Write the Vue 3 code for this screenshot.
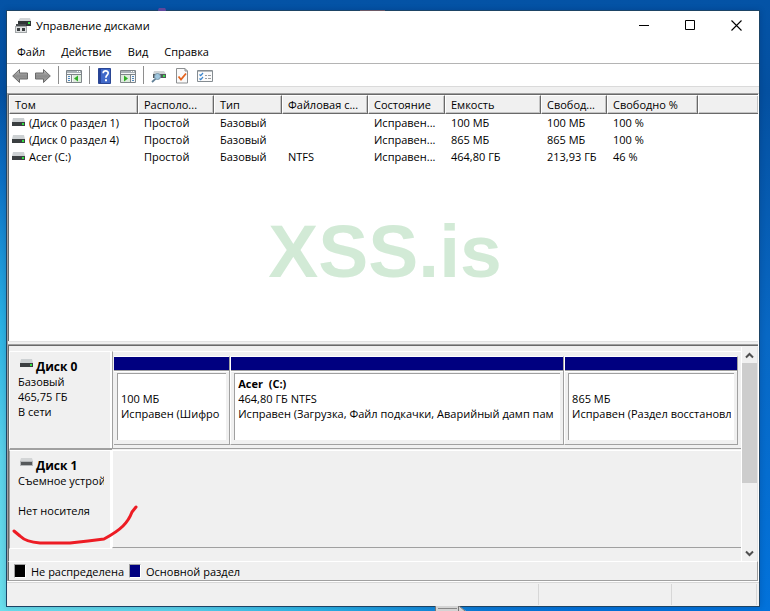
<script setup>
const menus = ['Файл', 'Действие', 'Вид', 'Справка']

const columns = [
  { title: 'Том', cls: 'c-volume' },
  { title: 'Располо...', cls: 'c-layout' },
  { title: 'Тип', cls: 'c-type' },
  { title: 'Файловая с...', cls: 'c-fs' },
  { title: 'Состояние', cls: 'c-state' },
  { title: 'Емкость', cls: 'c-size' },
  { title: 'Свобод...', cls: 'c-free' },
  { title: 'Свободно %', cls: 'c-percent' },
  { title: '', cls: 'c-rest' },
]

const volumes = [
  ['(Диск 0 раздел 1)', 'Простой', 'Базовый', '', 'Исправен...', '100 МБ', '100 МБ', '100 %', ''],
  ['(Диск 0 раздел 4)', 'Простой', 'Базовый', '', 'Исправен...', '865 МБ', '865 МБ', '100 %', ''],
  ['Acer (C:)', 'Простой', 'Базовый', 'NTFS', 'Исправен...', '464,80 ГБ', '213,93 ГБ', '46 %', ''],
]

const partitions = [
  { name: '', size: '100 МБ', state: 'Исправен (Шифро', grow: 116 },
  { name: 'Acer  (C:)', size: '464,80 ГБ NTFS', state: 'Исправен (Загрузка, Файл подкачки, Аварийный дамп пам', grow: 334 },
  { name: '', size: '865 МБ', state: 'Исправен (Раздел восстановл', grow: 173 },
]
</script>

<template>
  <div class="desktop">
    <svg class="speck speck-top" width="230" height="3" viewBox="0 0 230 3" aria-hidden="true">
      <path d="M0 3a4 4 0 0 1 8 0z" fill="#5f479c" />
      <path d="M202 2h25v1h-25z" fill="#6d5a66" />
    </svg>
    <svg class="speck speck-bottom" width="32" height="5" viewBox="0 0 32 5" aria-hidden="true">
      <path d="M1 0h23l7 5H1z" fill="#d4d4d4" />
      <path d="M0.500 0v5M23.500 0v5M24 0l6 5" stroke="#777" fill="none" />
      <path d="M3 2.500h19" stroke="#888" />
    </svg>

    <main class="window">
      <header class="titlebar">
        <svg width="16" height="16" viewBox="0 0 16 16" aria-hidden="true">
          <path d="M5 0h10l1 3H3z" fill="#d3d6d8" />
          <path d="M3 3h13v5H3z" fill="#303436" />
          <path d="M13 4h2v2h-2z" fill="#35e045" />
          <path d="M1 6h10v3H1z" fill="#4a4e50" />
          <path d="M0 8h12v7H0z" fill="#a3a7a9" />
          <path d="M1 9h10v5H1z" fill="#dfe1e2" />
          <path d="M2 10h3v3H2zM7 10h3v3H7z" fill="#3a3e40" />
        </svg>
        <h1>Управление дисками</h1>
        <div class="caption-buttons">
          <button type="button" aria-label="Свернуть">
            <svg width="11" height="11" viewBox="0 0 11 11"><path d="M0 5.500h10" stroke="#000" /></svg>
          </button>
          <button type="button" aria-label="Развернуть">
            <svg width="11" height="11" viewBox="0 0 11 11"><path d="M.5.5h9v9h-9z" fill="none" stroke="#000" /></svg>
          </button>
          <button type="button" aria-label="Закрыть">
            <svg width="11" height="11" viewBox="0 0 11 11"><path d="M.5.5l10 10M10.500.5l-10 10" stroke="#000" stroke-width="1.100" /></svg>
          </button>
        </div>
      </header>

      <nav class="menubar">
        <button v-for="m in menus" :key="m" type="button">{{ m }}</button>
      </nav>

      <div class="toolbar" role="toolbar">
        <button type="button" aria-label="Назад">
          <svg width="16" height="16" viewBox="0 0 16 16">
            <defs>
              <linearGradient id="arrow" x1="0" y1="0" x2="0" y2="1">
                <stop offset="0" stop-color="#c4c4c4" /><stop offset=".5" stop-color="#8b8b8b" /><stop offset="1" stop-color="#a8a8a8" />
              </linearGradient>
            </defs>
            <path d="M.7 8L7.500 1.500v3.500h8v6h-8v3.500z" fill="url(#arrow)" stroke="#6a6a6a" />
          </svg>
        </button>
        <button type="button" aria-label="Вперед">
          <svg width="16" height="16" viewBox="0 0 16 16"><path d="M15.300 8L8.500 1.500v3.500h-8v6h8v3.500z" fill="url(#arrow)" stroke="#6a6a6a" /></svg>
        </button>
        <span class="sep"></span>
        <button type="button" aria-label="Дерево консоли">
          <svg width="16" height="16" viewBox="0 0 16 16">
            <path d="M.5 2.500h15v12H.5z" fill="#f6f7f8" stroke="#7e8589" />
            <path d="M1 3h14v2H1z" fill="#a9b1b6" /><path d="M11 3h1v1h-1zM13 3h1v1h-1z" fill="#fff" />
            <path d="M1 6.500h14M5.500 7v7" stroke="#7e8589" />
            <path d="M2 8.500h2M2 10.500h2M2 12.500h2" stroke="#4c88bd" />
            <path d="M7 7h8v7H7z" fill="#ddebdc" /><path d="M12 7.500v6L8 10.500z" fill="#2fae25" />
          </svg>
        </button>
        <span class="sep"></span>
        <button type="button" aria-label="Справка">
          <svg width="16" height="16" viewBox="0 0 16 16">
            <path d="M1.500.5h12v15h-12z" fill="#4169c9" stroke="#2a4694" />
            <path d="M2 1h2v14H2z" fill="#274399" />
            <path d="M6.200 5.200C6.200 2.300 11.200 2.200 11.200 5c0 2.100-2.300 2.200-2.300 4.700" fill="none" stroke="#fff" stroke-width="1.700" />
            <path d="M8 11.300h2v2H8z" fill="#fff" />
          </svg>
        </button>
        <button type="button" aria-label="Панель действий">
          <svg width="16" height="16" viewBox="0 0 16 16">
            <path d="M.5 2.500h15v12H.5z" fill="#f6f7f8" stroke="#7e8589" />
            <path d="M1 3h14v2H1z" fill="#a9b1b6" /><path d="M11 3h1v1h-1zM13 3h1v1h-1z" fill="#fff" />
            <path d="M1 6.500h14M10.500 7v7" stroke="#7e8589" />
            <path d="M12 8.500h2M12 10.500h2M12 12.500h2" stroke="#4c88bd" />
            <path d="M1 7h9v7H1z" fill="#ddebdc" /><path d="M4 7.500v6l4-3z" fill="#2fae25" />
          </svg>
        </button>
        <span class="sep"></span>
        <button type="button" aria-label="Повторить проверку дисков">
          <svg width="16" height="16" viewBox="0 0 16 16">
            <path d="M3 3h10l2 3H2z" fill="#cfd3d5" />
            <path d="M2 6h13v4H2z" fill="#53595c" /><path d="M12 7h2v2h-2z" fill="#3be04b" />
            <circle cx="6.500" cy="8.500" r="3" fill="#9fc6de" stroke="#7a98aa" />
            <path d="M4.500 10.800L1 14" stroke="#5f7f96" stroke-width="1.800" />
          </svg>
        </button>
        <button type="button" aria-label="Свойства">
          <svg width="16" height="16" viewBox="0 0 16 16">
            <path d="M2.500.5h8.500l2.500 2.500v12h-11z" fill="#fafafa" stroke="#8c8f91" />
            <path d="M11 .5v2.500h2.500" fill="none" stroke="#8c8f91" />
            <path d="M4.500 8.500l2.500 3 5-6" fill="none" stroke="#e5641e" stroke-width="1.800" />
          </svg>
        </button>
        <button type="button" aria-label="Параметры">
          <svg width="16" height="16" viewBox="0 0 16 16">
            <path d="M.5 2.500h15v11H.5z" fill="#fbfbfb" stroke="#858c91" />
            <path d="M1 3h14v1H1z" fill="#b6bcc0" />
            <path d="M2.500 6.500l1.200 1.200L6 5M2.500 10.500l1.200 1.200L6 9" fill="none" stroke="#3a86cf" stroke-width="1.200" />
            <path d="M8 7.500h2M11 7.500h3M8 10.500h2M11 10.500h3" stroke="#9a9fa3" />
          </svg>
        </button>
      </div>

      <section class="console">
        <div class="volumes">
          <table>
            <thead>
              <tr>
                <th v-for="c in columns" :key="c.cls" :class="c.cls" scope="col">{{ c.title }}</th>
              </tr>
            </thead>
            <tbody>
              <tr v-for="v in volumes" :key="v[0]">
                <td v-for="(cell, i) in v" :key="i">
                  <span v-if="i === 0" class="volume">
                    <svg width="14" height="9" viewBox="0 0 14 9" aria-hidden="true">
                      <path d="M1 0h11l1 4H0z" fill="#cdd1d3" /><path d="M0 4h13v4H0z" fill="#3b3f41" /><path d="M10 5h2v2h-2z" fill="#2fe040" />
                    </svg>
                    {{ cell }}
                  </span>
                  <template v-else>{{ cell }}</template>
                </td>
              </tr>
            </tbody>
          </table>
        </div>
        <div class="splitter"></div>

        <div class="graph">
          <div class="disks">
            <article class="disk">
              <div class="disk-label">
                <h2>
                  <svg width="14" height="9" viewBox="0 0 14 9" aria-hidden="true">
                    <path d="M1 0h11l1 4H0z" fill="#cdd1d3" /><path d="M0 4h13v4H0z" fill="#3b3f41" /><path d="M10 5h2v2h-2z" fill="#2fe040" />
                  </svg>
                  Диск 0
                </h2>
                <p>Базовый</p>
                <p>465,75 ГБ</p>
                <p>В сети</p>
              </div>
              <div class="partitions">
                <div v-for="p in partitions" :key="p.size" class="partition" :style="{ flexGrow: p.grow }">
                  <div class="stripe"></div>
                  <div class="partition-body">
                    <div class="partition-text">
                      <strong>{{ p.name }}</strong>
                      <p>{{ p.size }}</p>
                      <p>{{ p.state }}</p>
                    </div>
                  </div>
                </div>
              </div>
            </article>
            <article class="disk empty">
              <div class="disk-label">
                <h2>
                  <svg width="14" height="9" viewBox="0 0 14 9" aria-hidden="true">
                    <path d="M1 0h11l1 3H0z" fill="#d3d5d6" /><path d="M0 3h13v5H0z" fill="#b4b7b9" /><path d="M1 4h11v3H1z" fill="#55585a" />
                  </svg>
                  Диск 1
                </h2>
                <p>Съемное устрой</p>
                <p class="gap"></p>
                <p>Нет носителя</p>
              </div>
              <div class="partitions"></div>
            </article>
          </div>
          <div class="scrollbar">
            <button type="button" aria-label="Вверх">
              <svg width="9" height="7" viewBox="0 0 9 7"><path d="M1 5.500L4.500 2 8 5.500" fill="none" stroke="#505050" stroke-width="2" /></svg>
            </button>
            <div class="track"><div class="thumb"></div></div>
            <button type="button" aria-label="Вниз">
              <svg width="9" height="7" viewBox="0 0 9 7"><path d="M1 1.500L4.500 5 8 1.500" fill="none" stroke="#505050" stroke-width="2" /></svg>
            </button>
          </div>
        </div>

        <div class="legend">
          <span class="key"><i class="swatch black"></i>Не распределена</span>
          <span class="key"><i class="swatch navy"></i>Основной раздел</span>
        </div>
      </section>

      <footer class="statusbar"><span class="wide"></span><span class="mid"></span><span class="last"></span></footer>
    </main>

    <div class="watermark">XSS.is</div>
    <svg class="scribble" width="128" height="44" viewBox="0 0 128 44" aria-hidden="true">
      <path d="M4 28L10 33Q16 39 30 40H60L78 38 94 36Q107 29 113 23 119 17 122 9L126 4" fill="none" stroke="#ed1c24" stroke-width="3" stroke-linecap="round" stroke-linejoin="round" />
    </svg>
  </div>
</template>

<style>
body {
  margin: 0;
}
</style>

<style scoped>
* {
  box-sizing: border-box;
}
.desktop {
  position: relative;
  height: 100vh;
  min-height: 560px;
  padding: 10px 10px 4px 6px;
  overflow: hidden;
  background:
    radial-gradient(ellipse 75% 85% at 0% 100%, #6adfec 0%, #5ad2ea 30%, #2ab2e4 55%, rgba(16, 128, 212, 0.6) 83%, rgba(6, 100, 200, 0) 100%),
    linear-gradient(180deg, #0453a6 0%, #0450a0 15%, #0868c4 55%, #0272da 100%);
  font-family: "Open Sans", "Noto Sans", sans-serif;
  font-size: 11px;
  line-height: 15px;
  color: #000;
}
button {
  display: flex;
  align-items: center;
  justify-content: center;
  padding: 0;
  border: 0;
  background: none;
  font: inherit;
  color: inherit;
}
svg {
  display: block;
  flex: none;
}
h1, h2, p {
  margin: 0;
  font-size: 11px;
}
.speck {
  position: absolute;
}
.speck-top {
  left: 158px;
  top: 8px;
}
.speck-bottom {
  left: 435px;
  bottom: 0;
}
.window {
  display: flex;
  flex-direction: column;
  height: 100%;
  border: 1px solid #1d4465;
  background: #f0f0f0;
  box-shadow: 0 0 6px rgba(0, 20, 60, 0.2);
}
.titlebar {
  display: flex;
  align-items: center;
  height: 29px;
  padding-left: 8px;
  gap: 5px;
  background: #fff;
}
.titlebar h1 {
  flex: 1;
  font-weight: 400;
}
.caption-buttons {
  display: flex;
}
.caption-buttons button {
  width: 46px;
  height: 29px;
}
.menubar {
  display: flex;
  gap: 16px;
  height: 23px;
  padding: 0 0 1px 10px;
  background: #fff;
}
.toolbar {
  display: flex;
  align-items: center;
  gap: 7px;
  height: 24px;
  padding-left: 5px;
  border-top: 1px solid #b4b4b4;
  border-bottom: 1px solid #dadada;
  background: #fff;
}
.toolbar button {
  padding-top: 1px;
}
.sep {
  width: 1px;
  height: 18px;
  background: #8e8e8e;
}
.console {
  display: flex;
  flex-direction: column;
  flex: 1;
  min-height: 0;
  margin-top: 6px;
  border-left: 1px solid #a0a0a0;
  border-top: 1px solid #a0a0a0;
  border-right: 1px solid #fff;
}
.volumes {
  flex: 1;
  min-height: 0;
  overflow: hidden;
  border-left: 1px solid #696969;
  border-top: 1px solid #696969;
  background: #fff;
}
table {
  width: 100%;
  table-layout: fixed;
  border-spacing: 0;
}
th, td {
  padding: 0 0 0 6px;
  overflow: hidden;
  white-space: nowrap;
  text-align: left;
  font-weight: 400;
}
th {
  height: 19px;
  border-top: 1px solid #fff;
  border-left: 1px solid #fff;
  border-right: 1px solid #696969;
  border-bottom: 1px solid #696969;
  background: #f0f0f0;
  box-shadow: inset -1px -1px #c4c4c4;
  padding-left: 5px;
}
td {
  height: 17px;
}
td:first-child {
  padding-left: 3px;
}
.c-volume { width: 129px; }
.c-layout { width: 76px; }
.c-type { width: 68px; }
.c-fs { width: 86px; }
.c-state { width: 77px; }
.c-size { width: 96px; }
.c-free { width: 66px; }
.c-percent { width: 91px; }
.c-rest { border-right: 0; }
.volume {
  display: flex;
  align-items: center;
  gap: 3px;
}
.splitter {
  height: 5px;
  border-top: 1px solid #e3e3e3;
  border-bottom: 1px solid #696969;
  box-shadow: inset 0 -1px #a0a0a0;
}
.graph {
  display: flex;
  height: 215px;
  border-left: 1px solid #696969;
  padding-top: 5px;
}
.disks {
  display: flex;
  flex-direction: column;
  flex: 1;
  min-width: 0;
}
.disk {
  display: flex;
  height: 99px;
}
.disk-label {
  width: 103px;
  flex: none;
  padding: 7px 8px 0 8px;
  overflow: hidden;
  white-space: nowrap;
  border-top: 1px solid #fff;
  border-left: 1px solid #fff;
  border-bottom: 2px solid #a0a0a0;
  box-shadow: inset -2px 0 #fff;
}
.disk-label h2 {
  display: flex;
  gap: 2px;
  padding-left: 2px;
  font-size: 12px;
}
.disk-label p {
  overflow: hidden;
}
.gap {
  height: 15px;
}
.partitions {
  display: flex;
  flex: 1;
  min-width: 0;
  padding: 4px 3px 3px 1px;
  border-top: 1px solid #fff;
  border-left: 1px solid #a0a0a0;
  border-bottom: 1px solid #a0a0a0;
  margin-bottom: 1px;
}
.empty .disk-label {
  border-bottom: 1px solid #fff;
  border-left-color: #a0a0a0;
}
.empty .partitions {
  border-left-color: #fff;
}
.partition {
  display: flex;
  flex-direction: column;
  flex: 1 1 0;
  min-width: 0;
  border-top: 1px solid #fff;
  border-left: 1px solid #fff;
  border-right: 1px solid #a0a0a0;
  border-bottom: 1px solid #a0a0a0;
}
.partition:first-child {
  border-left: 0;
}
.stripe {
  height: 14px;
  border-bottom: 1px solid #a0a0a0;
  background: #000080;
}
.partition-body {
  flex: 1;
  min-height: 0;
  padding: 1px 3px 4px;
  border-top: 1px solid #fff;
}
.partition-text {
  height: 100%;
  padding: 2px 3px 0;
  border-top: 1px solid #a0a0a0;
  border-left: 1px solid #a0a0a0;
  background: #fff;
  white-space: pre;
}
.partition-text strong,
.partition-text p {
  display: block;
  height: 15px;
  overflow: hidden;
}
.scrollbar {
  display: flex;
  flex-direction: column;
  width: 17px;
  margin-top: -4px;
  border-left: 1px solid #fff;
  border-right: 1px solid #e3e3e3;
}
.scrollbar button {
  height: 16px;
}
.track {
  flex: 1;
}
.thumb {
  height: 66%;
  background: #cdcdcd;
}
.legend {
  display: flex;
  align-items: center;
  gap: 5px;
  height: 20px;
  padding-left: 5px;
  border-left: 1px solid #696969;
  border-top: 1px solid #fff;
  border-right: 1px solid #a0a0a0;
  border-bottom: 1px solid #a0a0a0;
}
.key {
  display: flex;
  align-items: center;
  gap: 5px;
}
.swatch {
  width: 12px;
  height: 14px;
  border: 1px solid #fff;
  border-top-color: #a0a0a0;
  border-left-color: #a0a0a0;
}
.black { background: #000; }
.navy { background: #000080; }
.statusbar {
  display: flex;
  height: 25px;
  padding: 2px 2px 1px 0;
  border-top: 1px solid #fff;
  box-shadow: inset 0 1px #d7d7d7;
}
.statusbar span {
  border-right: 1px solid #d7d7d7;
}
.wide { flex: 1; }
.mid { width: 133px; }
.last { width: 85px; }
.watermark {
  position: absolute;
  top: 213px;
  left: 0;
  right: 0;
  text-align: center;
  font-family: "Liberation Sans", Arial, sans-serif;
  font-weight: 700;
  font-size: 75px;
  line-height: 76px;
  color: #d2ead6;
  pointer-events: none;
}
.scribble {
  position: absolute;
  left: 10px;
  bottom: 64px;
  pointer-events: none;
}
</style>
